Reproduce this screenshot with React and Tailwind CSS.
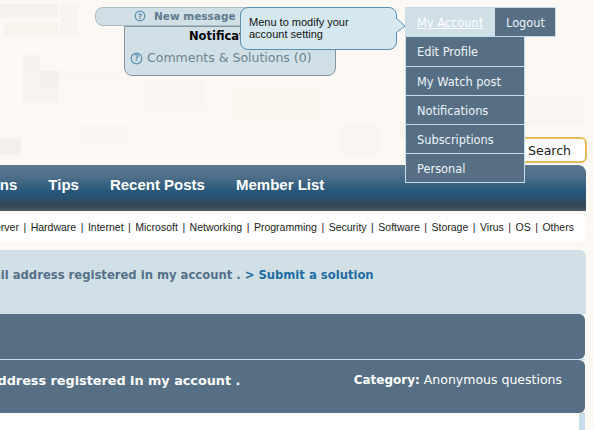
const sans = "font-['Liberation_Sans',sans-serif]";
const deja = "font-['DejaVu_Sans',sans-serif]";

const squares = [
  [0, 4, 58, 14, "#f5f1ec"], [4, 22, 54, 14, "#f8f3ed"], [60, 4, 18, 32, "#f8f4ef"],
  [23, 55, 17, 16, "#f7f2ed"], [23, 71, 36, 32, "#f7f3ee"], [40, 71, 18, 16, "#f3f0ec"],
  [0, 139, 21, 16, "#f3f0ec"], [60, 70, 70, 12, "#faf6f1"], [80, 125, 50, 20, "#faf6f2"],
  [145, 80, 60, 30, "#faf6f1"], [230, 90, 90, 30, "#faf6f0"], [340, 125, 40, 30, "#f9f5f0"],
  [400, 122, 125, 16, "#f6f2ed"], [525, 95, 60, 30, "#f9f5f0"],
];

const topics = ["Hardware", "Internet", "Microsoft", "Networking", "Programming", "Security", "Software", "Storage", "Virus", "OS", "Others"];
const menu = ["Edit Profile", "My Watch post", "Notifications", "Subscriptions", "Personal"];

function Help({ className }) {
  return (
    <svg viewBox="0 0 12 12" className={className} fill="none">
      <circle cx="6" cy="6" r="4.9" stroke="#5b8fb0" strokeWidth="1.1" />
      <text x="6" y="8.6" textAnchor="middle" fontSize="7.5" fontWeight="700" fill="#5b8fb0" fontFamily="DejaVu Sans">?</text>
    </svg>
  );
}

export default function App() {
  return (
    <div className={`relative h-[430px] w-[594px] overflow-hidden bg-[#fcf9f5] ${deja}`}>
      {squares.map(([x, y, w, h, c], i) => (
        <div key={i} className="absolute" style={{ left: x, top: y, width: w, height: h, background: c }} />
      ))}

      {/* page flow */}
      <div className="relative flex flex-col pt-[165px]">
        <nav className={`flex h-[46px] w-[586px] items-center gap-[31px] overflow-hidden rounded-tr-lg bg-[linear-gradient(#5a768f_0%,#4f6f89_25%,#24567a_60%,#2a526f_72%,#38464f_88%,#4a5a66_100%)] pb-[5px] text-[15px] font-bold text-white ${sans}`}>
          <span className="ml-[-51px]">Solutions</span>
          <span>Tips</span>
          <span>Recent Posts</span>
          <span>Member List</span>
        </nav>

        <div className={`mt-[3px] flex h-[28px] w-[586px] items-center gap-[4.5px] overflow-hidden whitespace-nowrap rounded-r-md bg-white text-[10.5px] text-[#222] ${sans}`}>
          <span className="ml-[-12px]">Server</span>
          {topics.map((t) => (
            <span key={t} className="flex gap-[4.5px]">
              <span>|</span>
              <span>{t}</span>
            </span>
          ))}
        </div>

        <div className="mt-[8px] flex h-[64px] w-[586px] items-start overflow-hidden whitespace-nowrap rounded-tr-md bg-[#d0e0e6] pt-[17px] text-[11.6px] font-bold text-[#55708a]">
          <span className="ml-[-27px]">email address registered in my account .</span>
          <span className="ml-[4px] text-[#1f6ca3]">&gt; Submit a solution</span>
        </div>

        <div className="h-[45px] w-[585px] rounded-r-md bg-[#566f84]" />
        <div className="h-px w-[585px] bg-[#c5dfee]" />
        <div className="flex h-[53px] w-[585px] items-start justify-between overflow-hidden whitespace-nowrap rounded-r-md bg-[#566f84] pt-[11px] text-[12.8px] text-white">
          <span className="ml-[-55px] font-bold">email address registered in my account .</span>
          <span className="mr-[23px] text-[12.5px]">
            <b className="text-[12px]">Category:</b> Anonymous questions
          </span>
        </div>

        <div className="flex h-[17px] w-[586px]">
          <div className="w-[579px] bg-white" />
          <div className="w-[6px] bg-[#c9dcea]" />
        </div>
      </div>

      {/* search box peeking out */}
      <div className="absolute left-[510px] top-[137px] flex h-[26px] w-[77px] items-center rounded-r-md border-2 border-[#e9b95a] bg-white pl-[16px] pt-[3px] text-[12.5px] text-[#222]">
        Search
      </div>

      {/* message / notifications */}
      <div className="absolute left-[124px] top-[26px] flex h-[50px] w-[212px] flex-col rounded-b-lg border border-[#82999f] bg-[#d0e0e6]">
        <div className="h-[17px] pl-[64px] pt-[1px] text-[11.5px] leading-[17px] font-bold text-black">Notifications</div>
        <div className="mt-[5px] flex items-center gap-[4px] pl-[5px] text-[12.5px] text-[#6b8494]">
          <Help className="h-[13px] w-[13px]" />
          Comments &amp; Solutions (0)
        </div>
      </div>
      <div className="absolute left-[95px] top-[7px] flex h-[19px] w-[170px] items-center rounded-l-lg border border-[#a9bcc4] bg-[#d0e0e6] pl-[38px] text-[10.5px] font-bold whitespace-nowrap text-[#5f7a90]">
        <Help className="mr-[8px] h-[12px] w-[12px] -translate-y-px" />
        New message
        <span className="ml-[4px] text-[#4a2a3a]">|</span>
      </div>

      {/* tooltip */}
      <div className={`absolute left-[240px] top-[7px] h-[43px] w-[157px] rounded-lg border border-[#5c8fb5] bg-[#d5e8f0] pl-[8px] pt-[8px] text-[11px] leading-[12px] text-[#111] ${sans}`}>
        Menu to modify your
        <br />
        account setting
        <svg className="absolute left-[155px] top-[9px]" width="11" height="18" viewBox="0 0 11 18">
          <path d="M0 1 L9 9 L0 16" fill="#d5e8f0" stroke="#5c8fb5" />
        </svg>
      </div>

      {/* account menu */}
      <div className="absolute left-[405px] top-[7px] w-[120px] text-[11.4px] text-[#eef4f8]">
        <div className="flex h-[30px] w-[151px] border border-[#c5dcec]">
          <div className="flex w-[89px] items-center bg-[#d0e0e6] pl-[11px] pt-[3px] text-white underline">My Account</div>
          <div className="flex flex-1 items-center bg-[#566f84] pl-[11px] pt-[3px]">Logout</div>
        </div>
        {menu.map((m, i) => (
          <div key={m} className={`flex items-center border border-t-0 border-[#c5dcec] bg-[#566f84] pl-[11px] ${i === 0 ? "h-[30px] pt-[3px]" : "h-[29px] pt-[4px]"}`}>
            {m}
          </div>
        ))}
      </div>
    </div>
  );
}
